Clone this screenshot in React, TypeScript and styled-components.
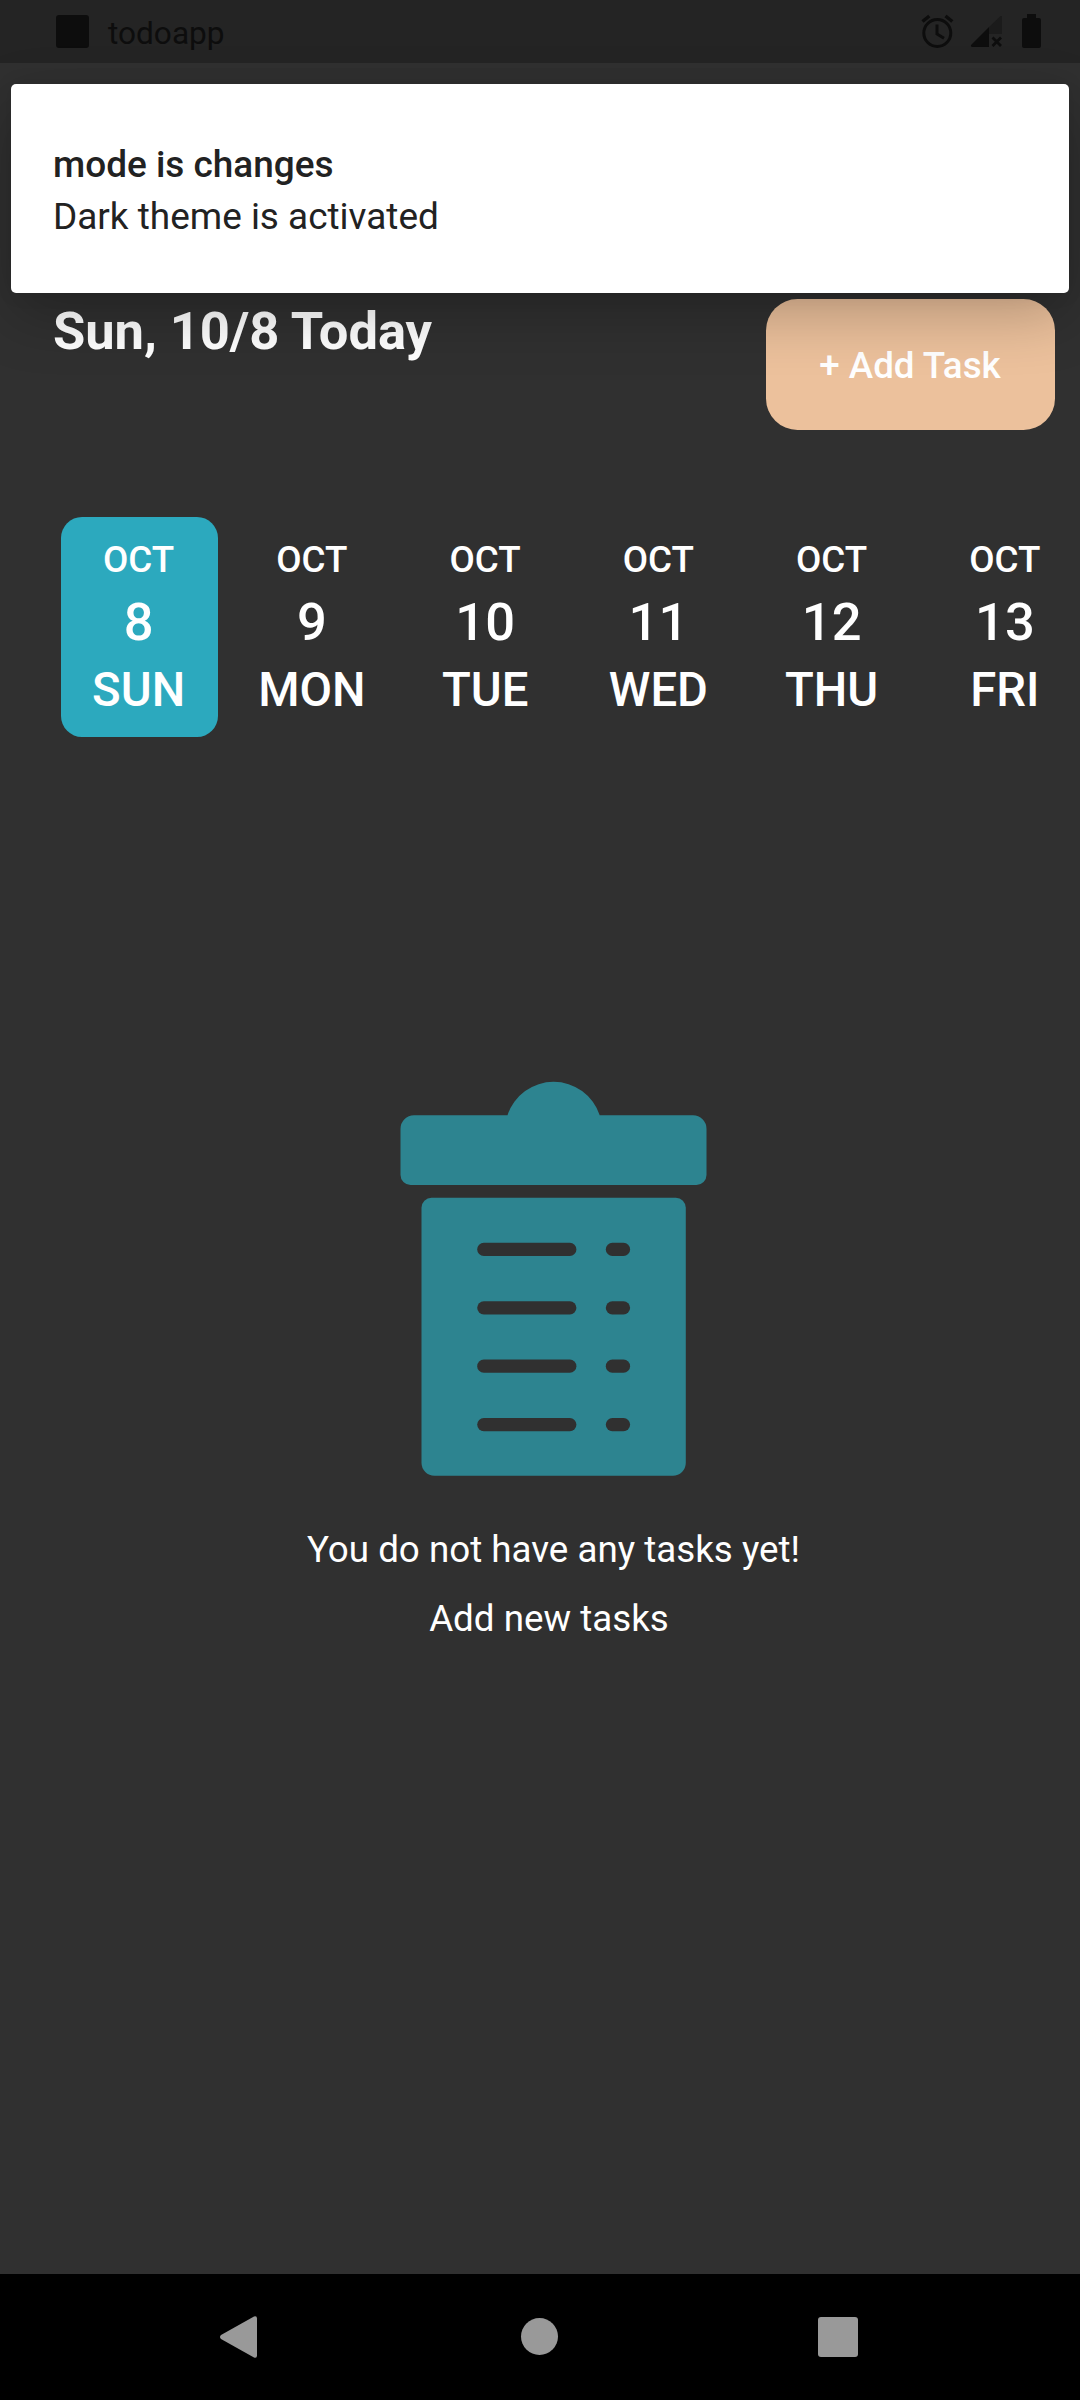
import React from "react";
import styled, { createGlobalStyle } from "styled-components";

const GlobalStyle = createGlobalStyle`
  * { box-sizing: border-box; }
  html, body { margin: 0; padding: 0; background: #303030; }
  body { font-family: Roboto, "Liberation Sans", sans-serif; }
`;

const Screen = styled.div`
  position: relative;
  display: flex;
  flex-direction: column;
  width: 1080px;
  height: 2400px;
  overflow: hidden;
  background: #303030;
  color: #fff;
`;

const StatusBar = styled.header`
  display: flex;
  align-items: center;
  justify-content: space-between;
  flex: none;
  height: 63px;
  padding: 0 37px 0 56px;
  background: #242424;
  color: #0d0d0d;
`;

const AppLabel = styled.div`
  display: flex;
  align-items: center;
  gap: 19px;
  font-size: 31.6px;
  line-height: 37px;
  padding-top: 4px;
`;

const AppBadge = styled.span`
  width: 33px;
  height: 33px;
  margin-top: -4px;
  border-radius: 3px;
  background: #0d0d0d;
`;

const StatusIcons = styled.svg`
  display: block;
  width: 125px;
  height: 63px;
`;

const Toast = styled.section`
  position: absolute;
  top: 84px;
  left: 11px;
  width: 1058px;
  height: 209px;
  padding: 55px 42px;
  border-radius: 5px;
  background: #fff;
  color: #222;
  box-shadow: 0 22px 60px rgba(0, 0, 0, 0.24), 0 0 20px rgba(0, 0, 0, 0.08);
`;

const ToastLine = styled.p<{ $strong?: boolean }>`
  margin: 0;
  font-size: 36.95px;
  line-height: 52px;
  font-weight: ${(p) => (p.$strong ? 500 : 400)};
`;

const TopRow = styled.div`
  display: flex;
  justify-content: space-between;
  flex: none;
  margin-top: 236px;
  padding: 0 25.5px 0 53px;
`;

const Heading = styled.h1`
  margin: 1px 0 0;
  font-size: 52.5px;
  line-height: 62px;
  font-weight: 700;
  letter-spacing: -0.08px;
`;

const AddButton = styled.button`
  width: 289px;
  height: 131px;
  padding: 2px 0 0;
  border: 0;
  border-radius: 31.5px;
  background: #ecc19c;
  color: #fff;
  font: 500 36.75px/44px Roboto, "Liberation Sans", sans-serif;
`;

const DateStrip = styled.div`
  display: flex;
  flex: none;
  gap: 15.75px;
  margin-top: 87px;
  padding-left: 60.9px;
`;

const DayTile = styled.div<{ $selected: boolean }>`
  display: flex;
  flex-direction: column;
  align-items: center;
  flex: none;
  width: 157.5px;
  height: 220px;
  padding: 21px 2px 0 0;
  border-radius: 21px;
  background: ${(p) => (p.$selected ? "#2ca9be" : "transparent")};
  font-weight: 500;
`;

const Month = styled.span`
  font-size: 36.75px;
  line-height: 43px;
`;

const DayNumber = styled.span`
  margin-top: 10px;
  font-size: 52.5px;
  line-height: 62px;
`;

const Weekday = styled.span`
  margin-top: 10px;
  font-size: 47.25px;
  line-height: 55px;
`;

const EmptyState = styled.main`
  display: flex;
  flex-direction: column;
  align-items: center;
  flex: 1;
  padding: 344px 0 0 27px;
`;

const ClipboardArt = styled.svg`
  display: block;
  width: 307px;
  height: 395px;
`;

const Message = styled.p<{ $gap: number }>`
  margin: ${(p) => p.$gap}px 0 0;
  font-size: 36.75px;
  line-height: 43px;
  white-space: pre;
`;

const NavBar = styled.nav`
  display: flex;
  align-items: center;
  justify-content: space-between;
  flex: none;
  height: 126px;
  padding: 0 222px 0 220px;
  background: #000;
  color: #999;
`;

const NavIcon = styled.svg`
  display: block;
  width: 40px;
  height: 44px;
`;

const days = [
  { month: "OCT", day: 8, name: "SUN" },
  { month: "OCT", day: 9, name: "MON" },
  { month: "OCT", day: 10, name: "TUE" },
  { month: "OCT", day: 11, name: "WED" },
  { month: "OCT", day: 12, name: "THU" },
  { month: "OCT", day: 13, name: "FRI" },
];

const selectedDay = 8;

function Clipboard() {
  return (
    <ClipboardArt viewBox="-0.5 0 307 395" fill="#2d8490">
      <path d="M107 34.300 A48.500 48.500 0 0 1 199.200 34.300 H292.500 A13.500 13.500 0 0 1 306 47.800 V94 A10 10 0 0 1 296 104 H10 A10 10 0 0 1 0 94 V47.800 A13.500 13.500 0 0 1 13.500 34.300 Z" />
      <path d="M31 116.700 H275.300 a10 10 0 0 1 10 10 V381.700 a13 13 0 0 1 -13 13 H34 a13 13 0 0 1 -13 -13 V126.700 a10 10 0 0 1 10 -10 Z" />
      {[0, 1, 2, 3].map((row) => (
        <g key={row} fill="#303030">
          <rect x="76.700" y={161.8 + row * 58.4} width="99.200" height="13.200" rx="6.600" />
          <rect x="205.300" y={161.8 + row * 58.4} width="24.300" height="13.200" rx="6.600" />
        </g>
      ))}
    </ClipboardArt>
  );
}

function SystemIcons() {
  return (
    <StatusIcons viewBox="918 0 125 63">
      <g fill="none" stroke="#0d0d0d" strokeWidth="3">
        <circle cx="937.300" cy="33" r="13.500" />
        <path d="M937 24.500 V34 L944 38.300" />
        <path d="M922.500 21.500 L929.300 16 M945.500 16 L952.300 21.500" strokeWidth="3.500" />
      </g>
      <path d="M1002 16 V34 H989 V27 L1000.500 16 Z" fill="#1b1b1b" />
      <path d="M989 27 V47 H972 Q970 46 971.500 44.500 Z" fill="#0d0d0d" />
      <path d="M992.500 37.500 L1001 46 M1001 37.500 L992.500 46" stroke="#0d0d0d" strokeWidth="2.800" />
      <path d="M1027 14 h9 v4 h3 q2 0 2 2 v26 q0 2 -2 2 h-15 q-2 0 -2 -2 v-26 q0 -2 2 -2 h3 Z" fill="#0d0d0d" />
    </StatusIcons>
  );
}

export default function App() {
  return (
    <Screen>
      <GlobalStyle />
      <StatusBar>
        <AppLabel>
          <AppBadge />
          todoapp
        </AppLabel>
        <SystemIcons />
      </StatusBar>
      <TopRow>
        <Heading>Sun, 10/8 Today</Heading>
        <AddButton>+ Add Task</AddButton>
      </TopRow>
      <DateStrip>
        {days.map((d) => (
          <DayTile key={d.day} $selected={d.day === selectedDay}>
            <Month>{d.month}</Month>
            <DayNumber>{d.day}</DayNumber>
            <Weekday>{d.name}</Weekday>
          </DayTile>
        ))}
      </DateStrip>
      <EmptyState>
        <Clipboard />
        <Message $gap={52}>You do not have any tasks yet!</Message>
        <Message $gap={26}>{"Add new tasks "}</Message>
      </EmptyState>
      <NavBar>
        <NavIcon viewBox="0 0 40 44" fill="currentColor">
          <path d="M1 20 L34 1.500 Q37 0.500 37 3.500 V40.500 Q37 43.500 34 42.500 L1 24 Q-1 22 1 20 Z" />
        </NavIcon>
        <NavIcon viewBox="0 0 40 44" fill="currentColor">
          <circle cx="20.500" cy="21.500" r="18.500" />
        </NavIcon>
        <NavIcon viewBox="0 0 40 44" fill="currentColor">
          <rect x="0" y="2" width="40" height="40" rx="3" />
        </NavIcon>
      </NavBar>
      <Toast>
        <ToastLine $strong>mode is changes</ToastLine>
        <ToastLine>Dark theme is activated</ToastLine>
      </Toast>
    </Screen>
  );
}
